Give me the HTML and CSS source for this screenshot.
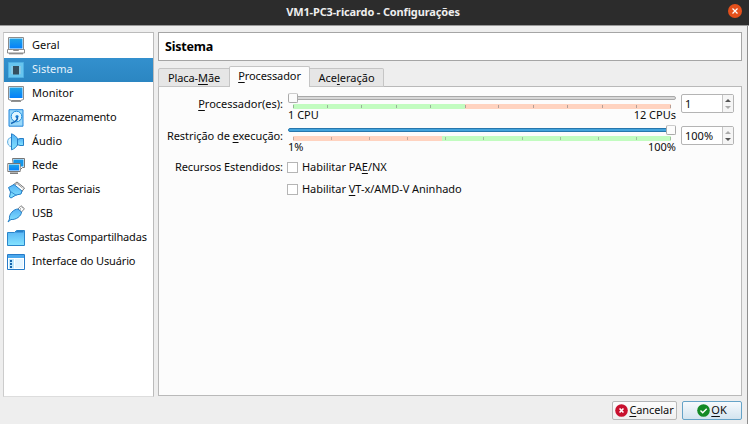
FILE: index.html
```html
<!DOCTYPE html>
<html lang="pt-BR">
<head>
<meta charset="utf-8">
<title>VM1-PC3-ricardo - Configurações</title>
<link rel="stylesheet" href="styles.css">
</head>
<body>
<svg width="0" height="0" class="defs" aria-hidden="true">
  <defs>
    <linearGradient id="screen" x2="0" y2="1"><stop stop-color="#20a5e8"/><stop offset="1" stop-color="#0580fa"/></linearGradient>
    <linearGradient id="sky" x2="0" y2="1"><stop stop-color="#55b2f5"/><stop offset="1" stop-color="#85e4ff"/></linearGradient>
  </defs>
</svg>
<div class="window">
  <header class="titlebar"><span></span><h1>VM1-PC3-ricardo - Configurações</h1>
    <button class="close" aria-label="Fechar"><svg width="14" height="14" viewBox="0 0 14 14"><circle cx="7" cy="7" r="7" fill="#e5501b"/><path d="M4.500 4.500l5 5m0-5l-5 5" stroke="#fff" stroke-width="1.200"/></svg></button>
  </header>
  <main class="body">
    <nav class="sidebar">
      <a class="item"><svg viewBox="0 0 18 18"><path d="M1.500.5h15v12h-15z" fill="#fff" stroke="#8c8c8c"/><path d="M2.500 1.500h13v10h-13z" fill="url(#screen)"/><path d="M.5 12.500h5l1 1h5l1-1h5v3.500H.5z" fill="#fff" stroke="#8c8c8c"/><path d="M2 16.800h14" stroke="#777"/></svg><span>Geral</span></a>
      <a class="item active"><svg viewBox="0 0 18 18"><path d="M1.500 1.500h15v15h-15z" fill="#67c5ef" stroke="#4eafe2"/><path d="M4 6h10M4 8h10M4 10h10M4 12h10" stroke="#a4cee0"/><path d="M6 5h6v8.500H6z" fill="#344f60"/></svg><span>Sistema</span></a>
      <a class="item"><svg viewBox="0 0 18 18"><path d="M1.500 1.500h15v13l-3 1h-9l-3-1z" fill="#fff" stroke="#8c8c8c"/><path d="M2.500 2.500h13v10.500h-13z" fill="url(#screen)"/><path d="M4 16.300h10" stroke="#777"/></svg><span>Monitor</span></a>
      <a class="item tight"><svg viewBox="0 0 18 18"><path d="M2 .7h14v16.500H2z" fill="#9ad9fa" stroke="#2486da"/><circle cx="9.500" cy="7.500" r="5.300" fill="#e0f7ff" stroke="#1e8fe0"/><circle cx="10" cy="7.500" r="1.600" fill="#1e85d8"/><path d="M10 7.500q2 4-6 7" fill="none" stroke="#1569ba" stroke-width="1.600"/></svg><span>Armazenamento</span></a>
      <a class="item"><svg viewBox="0 0 18 18"><path d="M4 4.500C-.5 5-.5 13 4 13.500" fill="#dff5ff" stroke="#5aaae0"/><path d="M4.500.8c3 1 5 3 6 5v6c-1 2-3 4-6 5z" fill="url(#sky)" stroke="#267fc6"/><path d="M10.500 6h2v-.5h4v7h-4V12h-2z" fill="url(#sky)" stroke="#267fc6"/></svg><span>Áudio</span></a>
      <a class="item"><svg viewBox="0 0 18 18"><path d="M5.500 1.500h12v9h-2l-2 2H7z" fill="#fff" stroke="#777"/><path d="M6.500 2.500h10v7h-10z" fill="#1496e9"/><path d="M.8 6.500h12.400v8H.8z" fill="#fff" stroke="#777"/><path d="M2 7.500h10v6H2z" fill="url(#screen)"/><path d="M3 16.200h8" stroke="#777" stroke-width="1.500"/></svg><span>Rede</span></a>
      <a class="item tight"><svg viewBox="0 0 18 18"><path d="M6 4l4-3 7.500 6-3 4z" fill="#fff" stroke="#777"/><path d="M8 4l2-1.500L15.500 7" fill="none" stroke="#999"/><path d="M1.500 6.500L7 3.500l8 6.500-1 3-5 1-5 3-1.500-1 1-5z" fill="url(#sky)" stroke="#237fc9"/><path d="M3.500 10.500l6 4" stroke="#348fd0"/></svg><span>Portas Seriais</span></a>
      <a class="item tight"><svg viewBox="0 0 18 18"><path d="M11 4l3-3.300 3.500 3L14.500 7z" fill="#fff" stroke="#888"/><path d="M13 3.500l1 .8m1-2l1 1" stroke="#777"/><path d="M1 17l1.500-3C1.500 9 7 4 11 4l3.500 3c0 4-5.500 8-10.500 7.500z" fill="url(#sky)" stroke="#267fc6"/></svg><span>USB</span></a>
      <a class="item tighter"><svg viewBox="0 0 18 18"><path d="M.5 16.500V3.500h7l2-2h8v15z" fill="url(#sky)" stroke="#2a86ca"/><path d="M9.500 2h7v1.500H8z" fill="#2782cb"/></svg><span>Pastas Compartilhadas</span></a>
      <a class="item tight"><svg viewBox="0 0 18 18"><path d="M.5 1.500h17v15H.5z" fill="#fff" stroke="#267bc8"/><path d="M1 2h16v3H1z" fill="#4ba8ed"/><path d="M2 6h5v9.500H2z" fill="#bce7fc"/><path d="M3 7h2v2H3zm0 3h2v2H3zm0 3h2v2H3z" fill="#1563aa"/><path d="M8 6h8v9H8z" fill="#e5f5ff"/></svg><span>Interface do Usuário</span></a>
    </nav>
    <section class="content">
      <h2>Sistema</h2>
      <div class="tabs">
        <div class="tab tab-board">Placa-<u>M</u>ãe</div>
        <div class="tab tab-cpu selected"><u>P</u>rocessador</div>
        <div class="tab tab-accel">Ace<u>l</u>eração</div>
      </div>
      <div class="pane">
        <div class="row">
          <label><u>P</u>rocessador(es):</label>
          <div class="slider">
            <div class="groove"></div>
            <div class="knob"></div>
            <svg class="scale" viewBox="0 0 380 6"><path d="M1 0h172v5H1z" fill="#c2fcc0"/><path d="M173 0h206v5H173z" fill="#ffd3c0"/><path d="M1.500 1v3M35.500 1v3M69.500 1v3M104.500 1v3M138.500 1v3M173.500 1v3M206.500 1v3M241.500 1v3M275.500 1v3M310.500 1v3M344.500 1v3M378.500 1v3" stroke="#777" stroke-opacity=".55"/></svg>
            <div class="ends"><span>1 CPU</span><span>12 CPUs</span></div>
          </div>
          <div class="spin"><span>1</span><i><svg viewBox="0 0 10 17"><path d="M2 7l3-3 3 3z" fill="#555"/><path d="M2 11h6l-3 3z" fill="#aaa"/></svg></i></div>
        </div>
        <div class="row">
          <label class="snug">Restrição de <u>e</u>xecução:</label>
          <div class="slider full">
            <div class="groove"></div>
            <div class="knob"></div>
            <svg class="scale" viewBox="0 0 380 6"><path d="M1 0h149v5H1z" fill="#ffd3c0"/><path d="M150 0h229v5H150z" fill="#c2fcc0"/><path d="M1.500 1v3M39.500 1v3M77.500 1v3M115.500 1v3M153.500 1v3M191.500 1v3M230.500 1v3M268.500 1v3M306.500 1v3M344.500 1v3M378.500 1v3" stroke="#777" stroke-opacity=".45"/></svg>
            <div class="ends"><span>1%</span><span>100%</span></div>
          </div>
          <div class="spin"><span>100%</span><i><svg viewBox="0 0 10 17"><path d="M2 7l3-3 3 3z" fill="#aaa"/><path d="M2 11h6l-3 3z" fill="#555"/></svg></i></div>
        </div>
        <div class="row check"><label class="snug">Recursos Estendidos:</label><b class="box"></b><span>Habilitar PA<u>E</u>/NX</span></div>
        <div class="row check"><label></label><b class="box"></b><span>Habilitar <u>V</u>T-x/AMD-V Aninhado</span></div>
      </div>
    </section>
  </main>
  <footer class="actions">
    <button class="btn cancel"><svg width="13" height="13" viewBox="0 0 12 12"><circle cx="6" cy="6" r="5.800" fill="#c8102e"/><path d="M4.200 4.200l3.600 3.600m0-3.600L4.200 7.800" stroke="#fff" stroke-width="1.500"/></svg><span><u>C</u>ancelar</span></button>
    <button class="btn ok"><svg width="13" height="13" viewBox="0 0 13 13"><circle cx="6.500" cy="6.500" r="6.300" fill="#138a25"/><path d="M3.500 6.500l2.200 2.200 4-4" fill="none" stroke="#fff" stroke-width="1.400"/></svg><span><u>O</u>K</span></button>
  </footer>
</div>
</body>
</html>
```
FILE: styles.css
```css
* { box-sizing: border-box; }
body { margin: 0; background: #fff; font: 11px/16px "Noto Sans", "Open Sans", sans-serif; color: #0c0c0c; overflow: hidden; }
.defs { display: block; height: 0; }
u { text-underline-offset: 2px; text-decoration-thickness: 1px; text-decoration-skip-ink: none; }
button { font: inherit; color: inherit; padding: 0; margin: 0; }
.window { width: 748px; height: 424px; background: #eee; border-right: 1px solid #8e8e8e; display: flex; flex-direction: column; }
.titlebar { height: 26px; width: 749px; background: #2c2c2c; border-bottom: 1px solid #999; display: grid; grid-template-columns: 20px 1fr 21px; align-items: center; flex: none; }
h1 { margin: 0; text-align: center; font-size: 11px; line-height: 14px; color: #eee; letter-spacing: -.14px; padding: 0 2px 2px 0; }
.close { border: 0; background: none; width: 14px; height: 14px; margin-top: -3px; }
.close svg { display: block; }
.body { display: flex; gap: 4px; padding: 6px 0 0 3px; height: 370px; flex: none; }
.sidebar { width: 151px; height: 365px; background: #fff; border: 1px solid #bbb; border-left-color: #ccc; border-bottom-color: #ddd; }
.item { display: flex; align-items: center; gap: 7px; height: 24px; padding-left: 3px; white-space: nowrap; }
.item:first-child { height: 25px; padding-top: 1px; }
.item svg { width: 18px; height: 18px; flex: none; }
.item span { margin-top: -2px; }
.tight span { letter-spacing: -.14px; }
.tighter span { letter-spacing: -.18px; }
.active { background: linear-gradient(#3390ce, #2b86c2); color: #e5f2fb; }
.content { width: 584px; display: flex; flex-direction: column; }
h2 { margin: 0; height: 29px; background: #fff; border: 1px solid #a5a5a5; font-size: 12.5px; line-height: 27px; padding-left: 6px; color: #000; letter-spacing: -.22px; }
.tabs { display: flex; height: 26px; align-items: flex-end; flex: none; margin-bottom: -1px; position: relative; }
.tab { height: 19px; line-height: 17px; background: #e6e6e6; border: 1px solid #c5c5c5; border-left: 0; text-align: center; white-space: nowrap; }
.tab-board { width: 72px; border-left: 1px solid #c5c5c5; border-top-left-radius: 2px; letter-spacing: -.1px; }
.tab-cpu { width: 81px; letter-spacing: -.1px; }
.tab-accel { width: 74px; border-top-right-radius: 2px; }
.selected { height: 21px; line-height: 18px; background: #fcfcfc; border-bottom: 0; border-left: 1px solid #c5c5c5; border-radius: 2px 2px 0 0; margin-left: -1px; }
.pane { height: 310px; background: #fcfcfc; border: 1px solid #b9b9b9; padding-top: 6px; flex: none; }
.row { display: grid; grid-template-columns: 124px 388px 53px; column-gap: 5px; height: 32px; white-space: nowrap; }
.row > label { text-align: right; line-height: 22px; }
.snug { letter-spacing: -.06px; }
.slider { display: flex; flex-direction: column; position: relative; }
.groove { height: 4px; margin-top: 3px; background: #d8d8d8; border: 1px solid #a9a9a9; border-radius: 2px; flex: none; }
.knob { position: absolute; left: 0; top: 0; width: 10px; height: 10px; background: #fcfcfc; border: 1px solid #aaa; border-top-color: #ccc; border-radius: 2px; }
.full .groove { background: #43a3dc; border-color: #2777ad; }
.full .knob { left: auto; right: 0; }
.scale { width: 380px; height: 6px; margin: 4px 0 0 4px; flex: none; }
.ends { display: flex; justify-content: space-between; line-height: 13px; height: 13px; margin-top: -2px; }
.spin { height: 19px; margin-top: 1px; border: 1px solid #b4b4b4; border-radius: 2px; background: #fff; display: grid; grid-template-columns: 1fr 11px; padding-left: 3px; line-height: 17px; }
.spin i { border-left: 1px solid #c5c5c5; background: #f5f5f5; display: block; }
.spin svg { display: block; width: 10px; height: 17px; }
.row.check { grid-template-columns: 124px 11px auto; column-gap: 4px; height: 22px; align-items: center; justify-content: start; }
.row.check > label { line-height: 20px; margin-top: -2px; }
.box { width: 11px; height: 11px; border: 1px solid #b5b5b5; background: #fff; margin: -2px 0 0; }
.row.check > .box + span { margin: -2px 0 0; letter-spacing: -.04px; }
.actions { display: flex; justify-content: flex-end; gap: 5px; padding: 5px 5px 0 0; }
.btn { height: 19px; border: 1px solid #b9b9b9; border-radius: 2px; background: linear-gradient(#fcfcfc, #f0f0f0); display: flex; align-items: center; justify-content: center; gap: 1px; white-space: nowrap; }
.btn span { margin-top: -1px; }
.cancel { width: 65px; letter-spacing: -.1px; }
.ok { width: 60px; border-color: #65a3c7; background: linear-gradient(#f6fafd, #d3e4ef); }
```
